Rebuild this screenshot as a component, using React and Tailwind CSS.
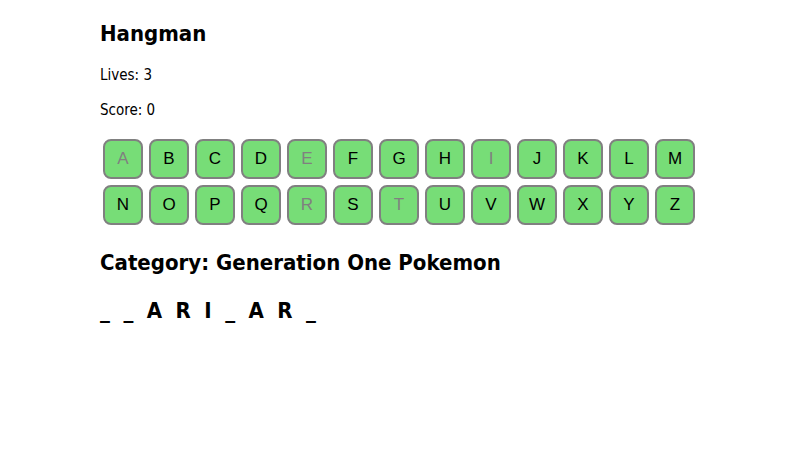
const ROW1 = ['A', 'B', 'C', 'D', 'E', 'F', 'G', 'H', 'I', 'J', 'K', 'L', 'M'];
const ROW2 = ['N', 'O', 'P', 'Q', 'R', 'S', 'T', 'U', 'V', 'W', 'X', 'Y', 'Z'];
const USED = ['A', 'E', 'I', 'R', 'T'];

function LetterButton({ letter }) {
  const used = USED.includes(letter);
  return (
    <button
      disabled={used}
      className={`shrink-0 m-[3px] w-10 h-10 rounded-lg border-2 border-[#808080] bg-[#77dd77] text-[17px] font-['Liberation_Sans',Arial,sans-serif] flex items-center justify-center ${used ? 'text-[#808080]' : 'text-black'}`}
    >
      {letter}
    </button>
  );
}

export default function App() {
  const word = '_ _ A R I _ A R _';
  return (
    <div className="min-h-screen bg-white text-black font-['DejaVu_Sans_Condensed','DejaVu_Sans',sans-serif] px-[100px] pt-[20px]">
      <h1 className="text-[22px] font-bold leading-[28px]">Hangman</h1>
      <p className="text-[15px] mt-[19px] leading-[16px]">Lives: 3</p>
      <p className="text-[15px] mt-[19px] leading-[16px]">Score: 0</p>

      <div className="mt-[18px] flex flex-col">
        <div className="flex">
          {ROW1.map(l => <LetterButton key={l} letter={l} />)}
        </div>
        <div className="flex">
          {ROW2.map(l => <LetterButton key={l} letter={l} />)}
        </div>
      </div>

      <h2 className="text-[22px] font-bold mt-[21px] leading-[28px]">Category: Generation One Pokemon</h2>
      <div className="text-[22px] font-bold mt-[20px] leading-[28px] tracking-[3.3px] whitespace-pre">{word}</div>
    </div>
  );
}
